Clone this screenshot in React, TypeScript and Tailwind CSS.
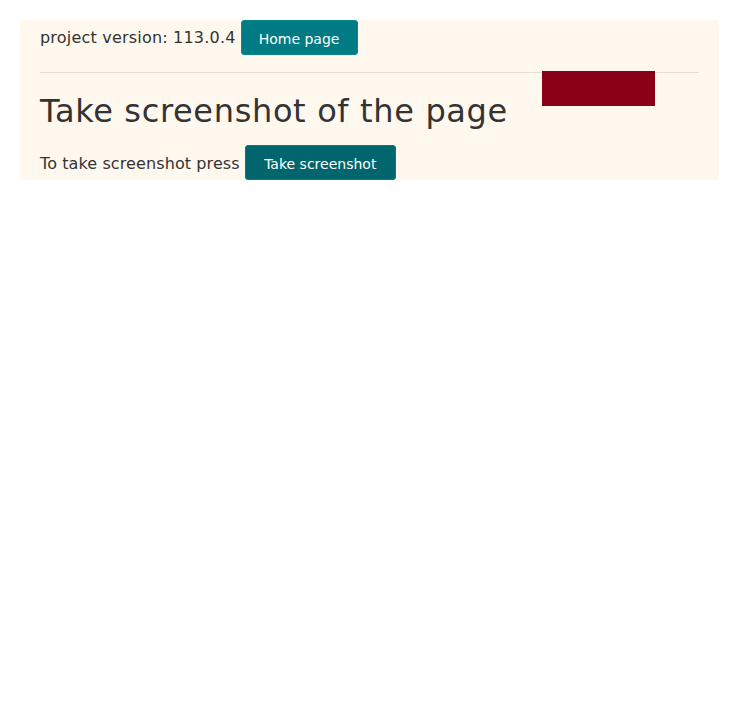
import React from 'react';

export default function App() {
  return (
    <div className="min-h-[714px] bg-white pt-5 px-5 font-['DejaVu_Sans',sans-serif] text-[#333]">
      <div className="relative bg-[#fff8ef] px-5">
        <div className="flex items-center h-[35px] text-base tracking-[0.2px]">
          <span className="pt-[1px]">project version: 113.0.4</span>
          <button className="ml-[5px] h-[35px] w-[117px] pt-[3px] rounded-[3px] border border-[#0a8a90] bg-[#007b83] text-white text-sm tracking-normal">
            Home page
          </button>
        </div>
        <hr className="mt-[17px] border-t border-[#e3dcd3]" />
        <div className="absolute left-[522px] top-[51px] w-[113px] h-[35px] bg-[#8a0016]" />
        <h1 className="mt-[20px] text-[32px] leading-[36px] tracking-[0.65px]">Take screenshot of the page</h1>
        <div className="mt-[16px] flex items-center h-[35px] text-base tracking-[0.1px]">
          <span className="pt-[2px]">To take screenshot press</span>
          <button className="ml-[5px] h-[35px] w-[151px] pt-[3px] rounded-[3px] border border-[#0a7880] bg-[#00656d] text-white text-sm tracking-normal">
            Take screenshot
          </button>
        </div>
      </div>
    </div>
  );
}
